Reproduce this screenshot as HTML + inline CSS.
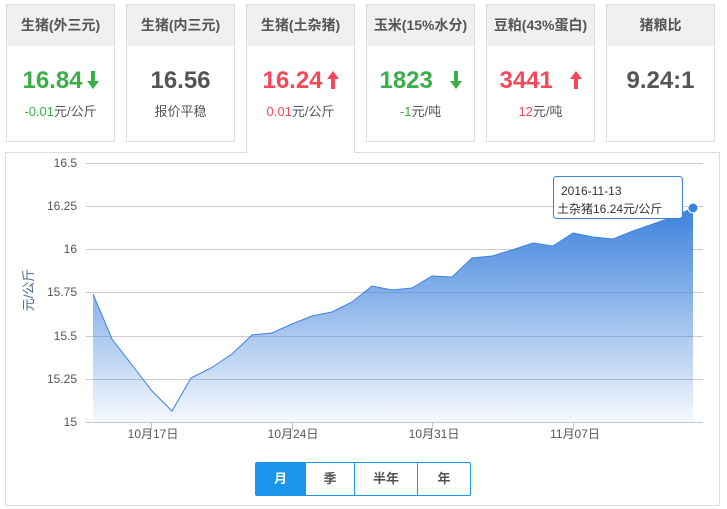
<!DOCTYPE html>
<html><head><meta charset="utf-8"><style>
*{margin:0;padding:0;box-sizing:border-box}
body{width:727px;height:509px;background:#fff;font-family:"Liberation Sans","Noto Sans CJK SC",sans-serif;position:relative;overflow:hidden}
.c{position:absolute;top:4px;width:109px;height:138px;border:1px solid #ddd;background:#fff;text-align:center}
.c .h{height:41px;background:#f0f0f0;font-size:14px;font-weight:bold;color:#555;line-height:41px}
.c .v{font-size:24px;font-weight:bold;margin-top:20px;line-height:30px}
.c .s{font-size:13px;color:#555;margin-top:5px}
.g{color:#3cae48}.r{color:#f5495a}.k{color:#555}
.sel{height:149px;border-bottom:none;z-index:2}
.chart{position:absolute;left:5px;top:152px;width:715px;height:354px;border:1px solid #ddd}
.btns{position:absolute;left:255px;top:462px;height:34px;display:flex;border:1px solid #1a96ec;border-radius:2px}
.btns div{height:32px;line-height:32px;text-align:center;font-size:13px;font-weight:bold;color:#555;border-left:1px solid #1a96ec}
.ar{display:inline-block;vertical-align:-1px;margin-left:4px}
</style></head><body>
<div class="c" style="left:6px"><div class="h">生猪(外三元)</div><div class="v g">16.84<svg class="ar" width="12" height="18"><path d="M4 0h4v10h4l-6 8-6-8h4z" fill="#3cae48"/></svg></div><div class="s"><span class="g">-0.01</span>元/公斤</div></div>
<div class="c" style="left:126px"><div class="h">生猪(内三元)</div><div class="v k">16.56</div><div class="s">报价平稳</div></div>
<div class="c sel" style="left:246px"><div class="h">生猪(土杂猪)</div><div class="v r">16.24<svg class="ar" width="12" height="18"><path d="M4 18h4v-10h4l-6-8-6 8h4z" fill="#f5495a"/></svg></div><div class="s"><span class="r">0.01</span>元/公斤</div></div>
<div class="c" style="left:366px"><div class="h">玉米(15%水分)</div><div class="v g">1823 <svg class="ar" width="12" height="18" style="margin-left:10px"><path d="M4 0h4v10h4l-6 8-6-8h4z" fill="#3cae48"/></svg></div><div class="s"><span class="g">-1</span>元/吨</div></div>
<div class="c" style="left:486px"><div class="h">豆粕(43%蛋白)</div><div class="v r">3441 <svg class="ar" width="12" height="18" style="margin-left:10px"><path d="M4 18h4v-10h4l-6-8-6 8h4z" fill="#f5495a"/></svg></div><div class="s"><span class="r">12</span>元/吨</div></div>
<div class="c" style="left:606px"><div class="h">猪粮比</div><div class="v k">9.24:1</div></div>
<div class="chart"></div>
<svg style="position:absolute;left:0;top:0" width="727" height="509">
<defs><linearGradient id="gr" x1="0" y1="0" x2="0" y2="1"><stop offset="0" stop-color="#3d82dc"/><stop offset="1" stop-color="#3d82dc" stop-opacity="0.05"/></linearGradient></defs>
<g stroke="#ccc" stroke-width="1">
<line x1="86" y1="163.5" x2="703" y2="163.5"/><line x1="86" y1="206.5" x2="703" y2="206.5"/><line x1="86" y1="249.5" x2="703" y2="249.5"/><line x1="86" y1="292.5" x2="703" y2="292.5"/><line x1="86" y1="336.5" x2="703" y2="336.5"/><line x1="86" y1="379.5" x2="703" y2="379.5"/>
</g>
<polygon fill="url(#gr)" points="93,294 112,339 132,365 152,391 172,411 191,378 211,368 232,354 252,335 272,333 292,324 312,316 332,312 352,302 372,286 392,290 412,288 432,276 452,277 472,258 492,256 512,250 533,243 553,246 573,233 593,237 613,239 633,231 653,224 673,217 693,208 693,422 93,422"/>
<polyline fill="none" stroke="#3d82dc" stroke-width="1" points="93,294 112,339 132,365 152,391 172,411 191,378 211,368 232,354 252,335 272,333 292,324 312,316 332,312 352,302 372,286 392,290 412,288 432,276 452,277 472,258 492,256 512,250 533,243 553,246 573,233 593,237 613,239 633,231 653,224 673,217 693,208"/>
<line x1="86" y1="422.5" x2="703" y2="422.5" stroke="#b8c8dc"/>
<g stroke="#b8c8dc"><line x1="151.5" y1="422" x2="151.5" y2="430"/><line x1="292.5" y1="422" x2="292.5" y2="430"/><line x1="432.5" y1="422" x2="432.5" y2="430"/><line x1="573.5" y1="422" x2="573.5" y2="430"/></g>
<g font-size="12" fill="#555" text-anchor="end" font-family="Liberation Sans,sans-serif">
<text x="77" y="167">16.5</text><text x="77" y="210">16.25</text><text x="77" y="253">16</text><text x="77" y="296">15.75</text><text x="77" y="340">15.5</text><text x="77" y="383">15.25</text><text x="77" y="426">15</text></g>
<g font-size="12" fill="#555" text-anchor="middle" font-family="Liberation Sans,Noto Sans CJK SC,sans-serif">
<text x="153" y="438">10月17日</text><text x="293" y="438">10月24日</text><text x="434" y="438">10月31日</text><text x="575" y="438">11月07日</text></g>
<text transform="translate(33,290) rotate(-90)" font-size="13" fill="#4a6a8e" text-anchor="middle" font-family="Liberation Sans,Noto Sans CJK SC,sans-serif">元/公斤</text>
<rect x="553.5" y="176.5" width="129" height="42" rx="3" fill="#fff" fill-opacity="0.95" stroke="#3d82dc"/>
<text x="561" y="195" font-size="12" fill="#333" font-family="Liberation Sans,Noto Sans CJK SC,sans-serif">2016-11-13</text>
<text x="557" y="213" font-size="12" fill="#333" font-family="Liberation Sans,Noto Sans CJK SC,sans-serif">土杂猪16.24元/公斤</text>
<circle cx="693" cy="208" r="5" fill="#3d82dc" stroke="#fff" stroke-width="1"/>
</svg>
<div class="btns"><div style="width:49px;background:#1a96ec;color:#fff;border-left:none">月</div><div style="width:49px">季</div><div style="width:63px">半年</div><div style="width:53px">年</div></div>
</body></html>
